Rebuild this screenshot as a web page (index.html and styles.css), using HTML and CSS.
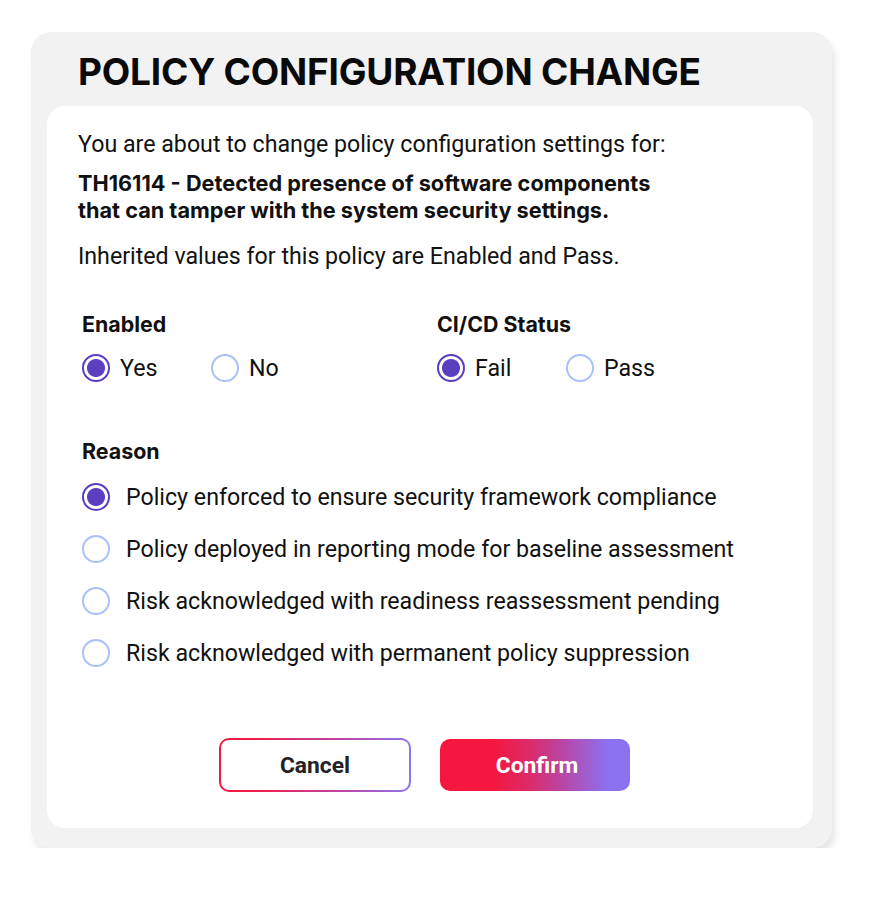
FILE: index.html
```html
<!DOCTYPE html>
<html lang="en">

<head>
    <meta charset="UTF-8">
    <meta name="viewport" content="width=device-width, initial-scale=1.0">
    <title>Policy configuration change</title>
    <link rel="stylesheet" href="styles.css">
</head>

<body>
    <div class="dialog">
        <h1 class="dialog-title">POLICY CONFIGURATION CHANGE</h1>
        <form class="panel">
            <p class="intro">You are about to change policy configuration settings for:</p>
            <p class="policy">TH16114 - Detected presence of software components<br>that can tamper with the system security settings.</p>
            <p class="inherited">Inherited values for this policy are Enabled and Pass.</p>

            <div class="fields">
                <div class="field">
                    <h3 class="label">Enabled</h3>
                    <div class="options">
                        <label class="option"><input type="radio" name="enabled" checked> Yes</label>
                        <label class="option"><input type="radio" name="enabled"> No</label>
                    </div>
                </div>
                <div class="field">
                    <h3 class="label">CI/CD Status</h3>
                    <div class="options">
                        <label class="option"><input type="radio" name="status" checked> Fail</label>
                        <label class="option"><input type="radio" name="status"> Pass</label>
                    </div>
                </div>
            </div>

            <div class="reason">
                <h3 class="label">Reason</h3>
                <div class="reason-list">
                    <label class="option"><input type="radio" name="reason" checked> Policy enforced to ensure security framework compliance</label>
                    <label class="option"><input type="radio" name="reason"> Policy deployed in reporting mode for baseline assessment</label>
                    <label class="option"><input type="radio" name="reason"> Risk acknowledged with readiness reassessment pending</label>
                    <label class="option"><input type="radio" name="reason"> Risk acknowledged with permanent policy suppression</label>
                </div>
            </div>

            <div class="actions">
                <button type="button" class="btn cancel">Cancel</button>
                <button type="submit" class="btn confirm">Confirm</button>
            </div>
        </form>
    </div>
</body>

</html>
```

FILE: styles.css
```css
* {
    margin: 0;
    padding: 0;
    box-sizing: border-box;
}

body {
    background: #fff;
    padding: 32px 0 0 31px;
    font-family: Roboto, "Liberation Sans", Arial, sans-serif;
    color: #111;
}

.dialog {
    width: 801px;
    height: 816px;
    background-color: #f2f2f2;
    border-radius: 20px;
    padding: 0 19px 20px 16px;
    box-shadow: 3px 6px 7px rgba(0, 0, 0, 0.1);
}

.dialog-title {
    font-family: Inter, "Liberation Sans", sans-serif;
    font-weight: 700;
    font-size: 37px;
    letter-spacing: -0.2px;
    line-height: 68px;
    height: 74px;
    padding-top: 6px;
    padding-left: 31px;
    color: #0a0a0a;
}

.panel {
    background-color: #fff;
    border-radius: 18px;
    height: 722px;
    padding: 25px 31px 0 31px;
}

.intro {
    font-size: 23.2px;
    line-height: 27px;
}

.policy {
    font-family: Inter, "Liberation Sans", sans-serif;
    font-weight: 700;
    font-size: 21.7px;
    line-height: 27px;
    margin-top: 12px;
}

.inherited {
    font-size: 23.2px;
    line-height: 27px;
    margin-top: 19px;
}

.fields {
    display: grid;
    grid-template-columns: 355px 1fr;
    margin-top: 41px;
    padding-left: 4px;
}

.label {
    font-family: Inter, "Liberation Sans", sans-serif;
    font-weight: 700;
    font-size: 21.4px;
    line-height: 27px;
}

.options {
    display: flex;
    margin-top: 16px;
}

.options .option {
    width: 129px;
}

.option {
    display: flex;
    align-items: center;
    gap: 10px;
    font-size: 23.2px;
    line-height: 28px;
    height: 28px;
}

.option input {
    appearance: none;
    -webkit-appearance: none;
    width: 28px;
    height: 28px;
    border-radius: 50%;
    border: 2px solid #a9c1f9;
    background: #fff;
    flex-shrink: 0;
    margin: 0;
}

.option input:checked {
    border-color: #5a3dc2;
    background: radial-gradient(circle, #5a3fc0 0 8.5px, #fff 9.5px);
}

.reason {
    margin-top: 56px;
    padding-left: 4px;
}

.reason-list {
    display: flex;
    flex-direction: column;
    gap: 24px;
    margin-top: 18px;
}

.reason-list .option {
    gap: 16px;
}

.actions {
    display: flex;
    justify-content: center;
    gap: 29px;
    margin-top: 71px;
    padding-right: 11px;
}

.btn {
    height: 54px;
    border-radius: 10px;
    font-family: Roboto, "Liberation Sans", sans-serif;
    font-weight: 700;
    font-size: 22.8px;
    cursor: pointer;
}

.cancel {
    width: 192px;
    color: #222;
    border: 2px solid transparent;
    background: linear-gradient(#fff, #fff) padding-box,
        linear-gradient(90deg, #f5173f 0%, #f01e4a 20%, #c2439e 60%, #8d72ee 100%) border-box;
}

.confirm {
    width: 190px;
    height: 52px;
    margin-top: 1px;
    padding-left: 4px;
    color: #fff;
    border: none;
    background: linear-gradient(90deg, #f5173f 0%, #f5173f 28%, #d92c6c 48%, #b24cb0 68%, #8c71ef 88%, #8c71ef 100%);
}
```
